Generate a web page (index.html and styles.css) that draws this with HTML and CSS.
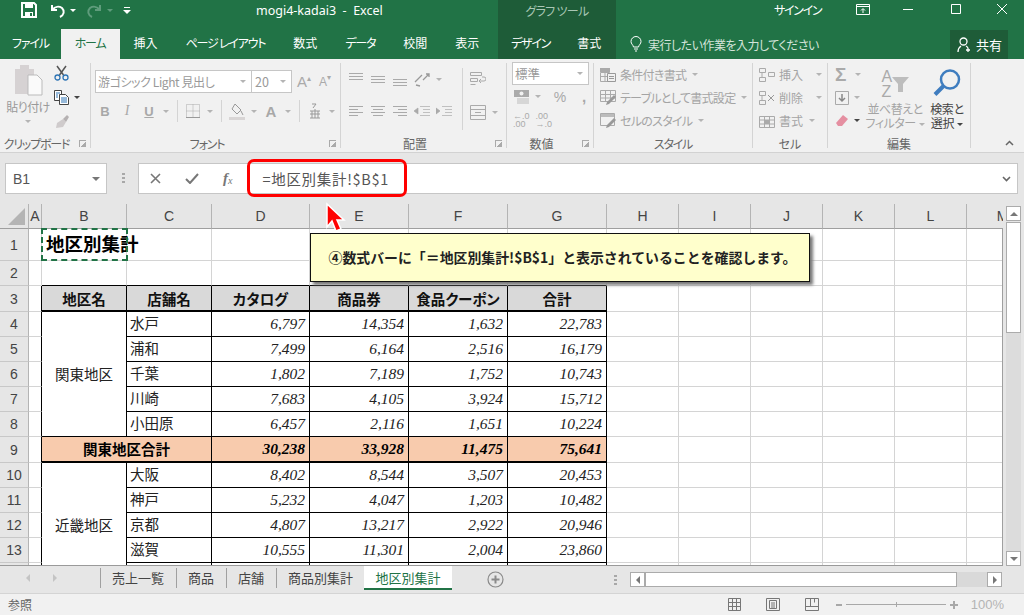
FILE: index.html
```html
<!DOCTYPE html>
<html lang="ja">
<head>
    <meta charset="UTF-8">
    <title>mogi4-kadai3 - Excel</title>
    <link rel="stylesheet" href="styles.css">
</head>
<body>
<div class="app">

    <header class="titlebar">
        <div class="title-main">
            <svg class="qat qat-save" width="16" height="16" viewBox="0 0 16 16"><path d="M1 1h12l2 2v12H1z" fill="none" stroke="#fff" stroke-width="2"/><path d="M4 1h8v5H4zM4 10h8v5H4z" fill="#fff"/><path d="M9 11h2v3H9z" fill="#217346"/></svg>
            <svg class="qat qat-undo" width="17" height="15" viewBox="0 0 17 15"><path d="M3 2v5h5M3.5 6.5C6 3.5 10 3 13 5c3 3 2 7-2 9" fill="none" stroke="#fff" stroke-width="2"/></svg>
            <i class="mini-caret white"></i>
            <svg class="qat qat-redo" width="17" height="15" viewBox="0 0 17 15"><path d="M14 2v5H9M13.500 6.500C11 3.500 7 3 4 5c-3 3-2 7 2 9" fill="none" stroke="#5f9c7c" stroke-width="2"/></svg>
            <i class="mini-caret dim"></i>
            <svg class="qat qat-custom" width="8" height="8" viewBox="0 0 8 8"><path d="M1 1h6v1H1zM0 4h8L4 8z" fill="#fff"/></svg>
            <div class="doc-title">mogi4-kadai3&nbsp; -&nbsp; Excel</div>
        </div>
        <div class="context-label">グラフ ツール</div>
        <div class="title-right">
            <span class="signin">サインイン</span>
            <svg class="win win-ribbon" width="14" height="11" viewBox="0 0 14 11"><path d="M.5.5h13v10H.5zM.5 2.500h13M7 9V5M5 6.500l2-2 2 2" fill="none" stroke="#fff"/></svg>
            <svg class="win win-min" width="10" height="10" viewBox="0 0 10 10"><path d="M0 5.500h10" stroke="#fff"/></svg>
            <svg class="win win-max" width="10" height="10" viewBox="0 0 10 10"><path d="M.5.500h9v9h-9z" fill="none" stroke="#fff"/></svg>
            <svg class="win win-close" width="10" height="10" viewBox="0 0 10 10"><path d="M0 0l10 10M10 0L0 10" stroke="#fff"/></svg>
        </div>
    </header>

    <nav class="tabrow">
        <div class="tabs-main">
            <span class="tab tab-file kana">ファイル</span>
            <span class="tab active kana">ホーム</span>
            <span class="tab">挿入</span>
            <span class="tab kana">ページ レイアウト</span>
            <span class="tab">数式</span>
            <span class="tab kana">データ</span>
            <span class="tab">校閲</span>
            <span class="tab">表示</span>
        </div>
        <div class="tabs-context">
            <span class="tab kana">デザイン</span>
            <span class="tab">書式</span>
        </div>
        <div class="tabs-right">
            <svg class="bulb" width="12" height="16" viewBox="0 0 12 16"><path d="M3.500 11C3 8.500 1 8 1 5.500a5 5 0 0 1 10 0C11 8 9 8.500 8.500 11zM4 13h4M5 15h2" fill="none" stroke="#fff"/></svg>
            <span class="tell-me">実行したい作業を入力してください</span>
            <span class="share">
                <svg width="15" height="15" viewBox="0 0 15 15"><circle cx="6.500" cy="4.500" r="3.500" fill="none" stroke="#fff" stroke-width="1.300"/><path d="M1 15c0-3 1.500-5 3-6M9 9c1 .5 1.500 1 2 2M11 11v4M9 13h4" fill="none" stroke="#fff" stroke-width="1.300"/></svg>
                共有
            </span>
        </div>
    </nav>

    <section class="ribbon">
        <div class="group g-clip">
            <div class="group-body">
                <div class="paste">
                    <svg width="29" height="32" viewBox="0 0 29 32"><path d="M1 5h5V1h9v4h5v25H1z" fill="#d6d2d3"/><path d="M14 11h9l5 5v15H14z" fill="#fafafa" stroke="#bbb"/></svg>
                    <span class="paste-text">貼り付け</span>
                    <i class="mini-caret"></i>
                </div>
                <div class="clip-tools">
                    <svg width="15" height="16" viewBox="0 0 15 16"><path d="M3 1l6.500 9M12 1L5.500 10" stroke="#555" stroke-width="1.500"/><circle cx="3.500" cy="12.500" r="2.500" fill="none" stroke="#2f75b5" stroke-width="1.300"/><circle cx="11.500" cy="12.500" r="2.500" fill="none" stroke="#2f75b5" stroke-width="1.300"/></svg>
                    <div class="clip-copy">
                        <svg width="15" height="15" viewBox="0 0 15 15"><path d="M.5.500h7v10h-7z" fill="#fff" stroke="#444"/><path d="M5.500 4.500h6l3 3v7h-9z" fill="#fff" stroke="#444"/><path d="M2 3h4M2 5h2M2 7h2M7 8h6M7 10h6M7 12h6" stroke="#2f75b5"/></svg>
                        <i class="mini-caret dark"></i>
                    </div>
                    <svg width="16" height="15" viewBox="0 0 16 15"><path d="M9 5l3 3-3 5-7 1 1-5z" fill="#cfcbcc"/><path d="M9 5l4-4 2 2-3 5z" fill="#b5b1b2"/></svg>
                </div>
            </div>
            <div class="group-label has-launcher kana-label">クリップボード</div>
            <i class="launcher"></i>
        </div>

        <div class="group g-font">
            <div class="group-body column">
                <div class="font-combos">
                    <span class="combo combo-font">游ゴシック Light 見出し<i class="mini-caret"></i></span>
                    <span class="combo combo-size">20<i class="mini-caret"></i></span>
                    <span class="grow-a big">A<sup>▴</sup></span>
                    <span class="grow-a small">A<sup>▾</sup></span>
                </div>
                <div class="tool-row font-row">
                    <span class="tool b">B</span>
                    <span class="tool i">I</span>
                    <span class="tool u">U</span>
                    <span class="caret-box"><i class="mini-caret"></i></span>
                    <span class="vsep"></span>
                    <span class="tool"><svg width="14" height="14" viewBox="0 0 14 14"><path d="M.5.500h13v13H.5zM7 .5v13M.5 7h13" fill="none" stroke="#aaa" stroke-dasharray="1 1"/><path d="M0 13.500h14" stroke="#999"/></svg></span>
                    <span class="caret-box"><i class="mini-caret"></i></span>
                    <span class="vsep"></span>
                    <span class="tool"><svg width="17" height="17" viewBox="0 0 17 17"><path d="M6 1l6 6-4 4-5-5zM12 8l2 4" fill="none" stroke="#999"/><path d="M0 14h16v3H0z" fill="#d8d5d5"/></svg></span>
                    <span class="caret-box"><i class="mini-caret"></i></span>
                    <span class="tool color-a">A</span>
                    <span class="caret-box"><i class="mini-caret"></i></span>
                    <span class="vsep"></span>
                    <span class="tool"><svg width="12" height="16" viewBox="0 0 12 16"><path d="M3 1h4L4 5M1 8h10M1 11h10M1 15h10M3 8v7M9 8v7M6 6v9" fill="none" stroke="#999"/></svg></span>
                    <span class="caret-box"><i class="mini-caret"></i></span>
                </div>
            </div>
            <div class="group-label has-launcher kana-label">フォント</div>
            <i class="launcher"></i>
        </div>

        <div class="group g-align">
            <div class="group-body">
                <div class="column align-left">
                    <div class="tool-row align-row1">
                        <span class="tool"><svg width="14" height="14" viewBox="0 0 14 14"><path d="M0 1.500h14M0 4.500h14M0 7.500h14" stroke="#aaa"/></svg></span>
                        <span class="tool"><svg width="14" height="14" viewBox="0 0 14 14"><path d="M0 4.500h14M0 7.500h14M0 10.500h14" stroke="#aaa"/></svg></span>
                        <span class="tool"><svg width="14" height="14" viewBox="0 0 14 14"><path d="M0 7.500h14M0 10.500h14M0 13.500h14" stroke="#aaa"/></svg></span>
                        <span class="tool"><svg width="16" height="15" viewBox="0 0 16 15"><path d="M1 10l7-7M2 13l4 1M9 8l6-6M12 2h3v3" fill="none" stroke="#999" stroke-width="1.300"/></svg></span>
                        <span class="caret-box"><i class="mini-caret"></i></span>
                    </div>
                    <div class="tool-row align-row2">
                        <span class="tool"><svg width="14" height="12" viewBox="0 0 14 12"><path d="M0 .5h14M0 3.500h9M0 6.500h14M0 9.500h9" stroke="#aaa"/></svg></span>
                        <span class="tool"><svg width="14" height="12" viewBox="0 0 14 12"><path d="M0 .5h14M2 3.500h10M0 6.500h14M2 9.500h10" stroke="#aaa"/></svg></span>
                        <span class="tool"><svg width="14" height="12" viewBox="0 0 14 12"><path d="M0 .5h14M5 3.500h9M0 6.500h14M5 9.500h9" stroke="#aaa"/></svg></span>
                        <span class="tool"><svg width="16" height="12" viewBox="0 0 16 12"><path d="M6 .5h10M9 3.500h7M9 6.500h7M6 9.500h10M0 5l4-3v6z" fill="#aaa" stroke="#aaa" stroke-width=".7"/></svg></span>
                        <span class="tool"><svg width="16" height="12" viewBox="0 0 16 12"><path d="M6 .5h10M9 3.500h7M9 6.500h7M6 9.500h10M4 5L0 2v6z" fill="#aaa" stroke="#aaa" stroke-width=".7"/></svg></span>
                    </div>
                </div>
                <span class="vsep tall"></span>
                <div class="column align-right">
                    <span class="tool"><svg width="16" height="15" viewBox="0 0 16 15"><path d="M.5.500h11v3H.5zM.5 6.500h7v3H.5zM.5 12.500h5M9 9h5a1.500 1.500 0 0 0 0-4h-2M11 7l-2 2 2 2" fill="none" stroke="#aaa"/></svg></span>
                    <div class="tool-row merge-row">
                        <span class="tool"><svg width="16" height="15" viewBox="0 0 16 15"><path d="M.5.500h15v14H.5zM.5 4.500h15M.5 10.500h15M5 7.500h6" fill="none" stroke="#aaa"/></svg></span>
                        <span class="caret-box"><i class="mini-caret"></i></span>
                    </div>
                </div>
            </div>
            <div class="group-label has-launcher">配置</div>
            <i class="launcher"></i>
        </div>

        <div class="group g-number">
            <div class="group-body column">
                <span class="combo combo-num">標準<i class="mini-caret"></i></span>
                <div class="tool-row num-row">
                    <span class="tool wide"><svg width="16" height="14" viewBox="0 0 16 14"><path d="M0 0h15v7H0z" fill="#aaa"/><circle cx="7.500" cy="3.500" r="2" fill="#f1f1f1"/><path d="M3 9h12M3 11h12M3 13h12" stroke="#bbb"/></svg></span>
                    <span class="caret-box"><i class="mini-caret"></i></span>
                    <span class="tool pct">%</span>
                    <span class="tool comma">,</span>
                </div>
                <div class="tool-row num-row small-nums">
                    <span class="dec">←.0<br>.00</span>
                    <span class="dec">.00<br>→.0</span>
                </div>
            </div>
            <div class="group-label has-launcher">数値</div>
            <i class="launcher"></i>
        </div>

        <div class="group g-style">
            <div class="group-body column rows3">
                <div class="cmd">
                    <svg width="16" height="14" viewBox="0 0 16 14"><path d="M0 0h10v4H0z" fill="#aaa"/><path d="M.5 4.500h9v9h-9zM5 4v10M0 8.500h10" fill="none" stroke="#aaa"/><path d="M7.500 5.500h8v8h-8z" fill="#f1f1f1" stroke="#999"/><path d="M9 8.500h5M9 10.500h5" stroke="#999"/></svg>
                    <span>条件付き書式</span><i class="mini-caret"></i>
                </div>
                <div class="cmd">
                    <svg width="16" height="15" viewBox="0 0 16 15"><path d="M.5.500h15v11H.5zM5.500.5v11M10.500.5v11M.5 4.500h15M.5 8h15" fill="none" stroke="#aaa"/><path d="M14 5l2 2-7 7-3 1 1-3z" fill="#999"/></svg>
                    <span>テーブルとして書式設定</span><i class="mini-caret"></i>
                </div>
                <div class="cmd">
                    <svg width="16" height="15" viewBox="0 0 16 15"><path d="M.5.500h14v12H.5z" fill="none" stroke="#aaa"/><path d="M1 1h13v3H1z" fill="#bbb"/><path d="M14 5l2 2-7 7-3 1 1-3z" fill="#999"/></svg>
                    <span>セルのスタイル</span><i class="mini-caret"></i>
                </div>
            </div>
            <div class="group-label kana-label">スタイル</div>
        </div>

        <div class="group g-cells">
            <div class="group-body column rows3">
                <div class="cmd">
                    <svg width="16" height="14" viewBox="0 0 16 14"><path d="M.5.500h6v4h-6zM.5 9.500h6v4h-6zM9.500 4.500h6v4h-6zM3 5v4" fill="none" stroke="#aaa"/></svg>
                    <span>挿入</span><i class="mini-caret spaced"></i>
                </div>
                <div class="cmd">
                    <svg width="16" height="14" viewBox="0 0 16 14"><path d="M.5.500h6v4h-6zM.5 9.500h6v4h-6zM3 5v4" fill="none" stroke="#aaa"/><path d="M9 4l6 6M15 4l-6 6" stroke="#999"/></svg>
                    <span>削除</span><i class="mini-caret spaced"></i>
                </div>
                <div class="cmd">
                    <svg width="16" height="14" viewBox="0 0 16 14"><path d="M.5 2.500h15v11H.5zM.5 6h15M.5 10h15M5.500 2v12M10.500 2v12" fill="none" stroke="#aaa"/><path d="M5 6h6v4H5z" fill="#aaa"/></svg>
                    <span>書式</span><i class="mini-caret"></i>
                </div>
            </div>
            <div class="group-label">セル</div>
        </div>

        <div class="group g-edit">
            <div class="group-body">
                <div class="column edit-small">
                    <div class="edit-row">
                        <span class="sigma">Σ</span><i class="mini-caret"></i>
                    </div>
                    <div class="edit-row">
                        <svg width="14" height="14" viewBox="0 0 14 14"><path d="M.5.500h13v13H.5z" fill="none" stroke="#aaa"/><path d="M7 3v7M4 7l3 3 3-3" fill="none" stroke="#888" stroke-width="1.500"/></svg>
                        <i class="mini-caret"></i>
                    </div>
                    <div class="edit-row">
                        <svg width="14" height="14" viewBox="0 0 14 14"><path d="M8 1l5 4-6 7H3L1 9z" fill="#e58fa1"/></svg>
                        <i class="mini-caret dark"></i>
                    </div>
                </div>
                <div class="big-cmd sort">
                    <div class="sort-icon">
                        <span class="az">A<br>Z</span>
                        <svg width="17" height="15" viewBox="0 0 17 15"><path d="M0 0h17l-6 7v8H6V7z" fill="#bdbdbd"/></svg>
                    </div>
                    <span>並べ替えと</span>
                    <span>フィルター<i class="mini-caret inline"></i></span>
                </div>
                <div class="big-cmd find">
                    <svg width="28" height="28" viewBox="0 0 28 28"><circle cx="17" cy="11" r="9" fill="none" stroke="#3f7dbf" stroke-width="2.500"/><path d="M10.500 17.500L2 26" stroke="#3f7dbf" stroke-width="4"/></svg>
                    <span>検索と</span>
                    <span>選択<i class="mini-caret inline dark"></i></span>
                </div>
            </div>
            <div class="group-label">編集</div>
        </div>

        <svg class="collapse" width="9" height="6" viewBox="0 0 9 6"><path d="M1 5l3.500-3.500L8 5" fill="none" stroke="#666" stroke-width="1.500"/></svg>
    </section>

    <section class="formula-bar">
        <div class="name-box">B1<i class="mini-caret big"></i></div>
        <div class="grip"></div>
        <div class="formula-input">
            <svg class="fx-btn" width="11" height="11" viewBox="0 0 11 11"><path d="M1 1l9 9M10 1l-9 9" stroke="#777" stroke-width="1.600"/></svg>
            <svg class="fx-btn" width="14" height="11" viewBox="0 0 14 11"><path d="M1 6l4 4 8-9" fill="none" stroke="#777" stroke-width="2"/></svg>
            <span class="fx-btn fx"><em>f</em><sub>x</sub></span>
            <span class="formula-text">=地区別集計!$B$1</span>
            <svg class="formula-chevron" width="9" height="6" viewBox="0 0 9 6"><path d="M1 1l3.500 3.500L8 1" fill="none" stroke="#666" stroke-width="1.600"/></svg>
        </div>
    </section>

    <section class="sheet">
        <div class="grid-wrap">
            <table class="grid">
                <colgroup>
                    <col class="c-head"><col class="c-a"><col class="c-b"><col class="c-b"><col class="c-d">
                    <col class="c-e"><col class="c-e"><col class="c-e">
                    <col class="c-x"><col class="c-x"><col class="c-x"><col class="c-x"><col class="c-x"><col class="c-x">
                </colgroup>
                <tr class="h-head">
                    <th class="corner"><i></i></th><th>A</th><th>B</th><th>C</th><th>D</th><th>E</th><th>F</th><th>G</th><th>H</th><th>I</th><th>J</th><th>K</th><th>L</th><th>M</th>
                </tr>
                <tr class="h-title">
                    <th>1</th><td></td><td class="book-title">地区別集計</td><td></td><td></td><td></td><td></td><td></td><td></td><td></td><td></td><td></td><td></td><td></td>
                </tr>
                <tr class="h-row">
                    <th>2</th><td></td><td class="line-b"></td><td class="line-b"></td><td class="line-b"></td><td class="line-b"></td><td class="line-b"></td><td class="line-b"></td><td></td><td></td><td></td><td></td><td></td><td></td>
                </tr>
                <tr class="h-bold">
                    <th>3</th><td class="line-r"></td><td class="hdr">地区名</td><td class="hdr">店舗名</td><td class="hdr">カタログ</td><td class="hdr">商品券</td><td class="hdr">食品クーポン</td><td class="hdr">合計</td><td></td><td></td><td></td><td></td><td></td><td></td>
                </tr>
                <tr class="h-row">
                    <th>4</th><td class="line-r"></td><td class="area" rowspan="5">関東地区</td><td class="shop">水戸</td><td class="num">6,797</td><td class="num">14,354</td><td class="num">1,632</td><td class="num">22,783</td><td></td><td></td><td></td><td></td><td></td><td></td>
                </tr>
                <tr class="h-row">
                    <th>5</th><td class="line-r"></td><td class="shop">浦和</td><td class="num">7,499</td><td class="num">6,164</td><td class="num">2,516</td><td class="num">16,179</td><td></td><td></td><td></td><td></td><td></td><td></td>
                </tr>
                <tr class="h-row">
                    <th>6</th><td class="line-r"></td><td class="shop">千葉</td><td class="num">1,802</td><td class="num">7,189</td><td class="num">1,752</td><td class="num">10,743</td><td></td><td></td><td></td><td></td><td></td><td></td>
                </tr>
                <tr class="h-row">
                    <th>7</th><td class="line-r"></td><td class="shop">川崎</td><td class="num">7,683</td><td class="num">4,105</td><td class="num">3,924</td><td class="num">15,712</td><td></td><td></td><td></td><td></td><td></td><td></td>
                </tr>
                <tr class="h-row">
                    <th>8</th><td class="line-r"></td><td class="shop">小田原</td><td class="num">6,457</td><td class="num">2,116</td><td class="num">1,651</td><td class="num">10,224</td><td></td><td></td><td></td><td></td><td></td><td></td>
                </tr>
                <tr class="h-bold">
                    <th>9</th><td class="line-r"></td><td class="sub-name" colspan="2">関東地区合計</td><td class="sub">30,238</td><td class="sub">33,928</td><td class="sub">11,475</td><td class="sub">75,641</td><td></td><td></td><td></td><td></td><td></td><td></td>
                </tr>
                <tr class="h-row">
                    <th>10</th><td class="line-r"></td><td class="area" rowspan="5">近畿地区</td><td class="shop">大阪</td><td class="num">8,402</td><td class="num">8,544</td><td class="num">3,507</td><td class="num">20,453</td><td></td><td></td><td></td><td></td><td></td><td></td>
                </tr>
                <tr class="h-row">
                    <th>11</th><td class="line-r"></td><td class="shop">神戸</td><td class="num">5,232</td><td class="num">4,047</td><td class="num">1,203</td><td class="num">10,482</td><td></td><td></td><td></td><td></td><td></td><td></td>
                </tr>
                <tr class="h-row">
                    <th>12</th><td class="line-r"></td><td class="shop">京都</td><td class="num">4,807</td><td class="num">13,217</td><td class="num">2,922</td><td class="num">20,946</td><td></td><td></td><td></td><td></td><td></td><td></td>
                </tr>
                <tr class="h-row">
                    <th>13</th><td class="line-r"></td><td class="shop">滋賀</td><td class="num">10,555</td><td class="num">11,301</td><td class="num">2,004</td><td class="num">23,860</td><td></td><td></td><td></td><td></td><td></td><td></td>
                </tr>
                <tr class="h-row">
                    <th></th><td class="line-r"></td><td class="shop"></td><td class="num"></td><td class="num"></td><td class="num"></td><td class="num"></td><td></td><td></td><td></td><td></td><td></td><td></td>
                </tr>
            </table>
        </div>
        <div class="vscroll">
            <span class="sb-btn"><i class="tri up"></i></span>
            <span class="sb-thumb"></span>
            <span class="sb-space"></span>
            <span class="sb-btn"><i class="tri down"></i></span>
        </div>
    </section>

    <div class="sheet-tabs">
        <div class="tab-nav"><i class="tri left pale"></i><i class="tri right pale"></i></div>
        <span class="stab">売上一覧</span>
        <span class="stab">商品</span>
        <span class="stab">店舗</span>
        <span class="stab">商品別集計</span>
        <span class="stab current">地区別集計</span>
        <svg class="add-sheet" width="17" height="17" viewBox="0 0 17 17"><circle cx="8.500" cy="8.500" r="7.500" fill="none" stroke="#8a8a8a" stroke-width="1.200"/><path d="M8.500 4.500v8M4.500 8.500h8" stroke="#8a8a8a" stroke-width="2"/></svg>
        <div class="grip small"></div>
        <div class="hscroll">
            <span class="hs-btn"><i class="tri left"></i></span>
            <span class="hs-thumb"></span>
            <span class="hs-space"></span>
            <span class="hs-btn"><i class="tri right"></i></span>
        </div>
    </div>

    <footer class="statusbar">
        <span class="mode">参照</span>
        <div class="status-right">
            <svg width="13" height="13" viewBox="0 0 13 13"><path d="M.5.500h12v12H.5zM4.500.5v12M8.500.5v12M.5 4.500h12M.5 8.500h12" fill="none" stroke="#777"/></svg>
            <svg width="14" height="13" viewBox="0 0 14 13"><path d="M.5.500h13v12H.5z" fill="none" stroke="#777"/><path d="M3.500 2.500h7v8h-7zM5 5h4M5 7h4M5 9h4" fill="none" stroke="#777"/></svg>
            <svg width="14" height="13" viewBox="0 0 14 13"><path d="M.5.500h13v12H.5zM.5 8.500h13M5.500.5v8M9.500.5v4" fill="none" stroke="#777"/></svg>
            <div class="zoom-ctl">
                <span class="zoom-minus"></span>
                <span class="zoom-track"><i></i></span>
                <span class="zoom-plus"></span>
            </div>
            <span class="zoom-val">100%</span>
        </div>
    </footer>

    <div class="ants"></div>
    <div class="red-frame"></div>
    <svg class="pointer" width="24" height="32" viewBox="0 0 24 32"><path d="M3 2v23l5-6 4 10 5-2-4-9h7z" fill="#f00" stroke="#fff" stroke-width="1.500"/></svg>
    <div class="callout">④数式バーに「＝地区別集計!$B$1」と表示されていることを確認します。</div>
</div>
</body>
</html>
```

FILE: styles.css
```css
* {
    box-sizing: border-box;
}
html, body {
    margin: 0;
    height: 100%;
    overflow: hidden;
}
body {
    font-family: "Noto Sans CJK JP", "Noto Sans", sans-serif;
    font-feature-settings: "palt";
    font-size: 12px;
    color: #444;
}
.app {
    position: relative;
    width: 1024px;
    height: 615px;
    overflow: hidden;
    background: #e6e6e6;
}
.column {
    display: flex;
    flex-direction: column;
}

/* title bar */
.titlebar {
    display: flex;
    height: 29px;
    color: #fff;
    background: #217346;
}
.title-main {
    display: flex;
    align-items: center;
    width: 498px;
    height: 20px;
    padding-left: 21px;
}
.qat-undo { margin-left: 12px; }
.qat-redo { margin-left: 10px; }
.qat-custom { margin-left: 10px; }
.doc-title {
    margin-left: 125px;
    font-family: "Noto Sans", sans-serif;
    font-size: 12.500px;
    white-space: nowrap;
}
.context-label {
    width: 118px;
    padding-top: 2px;
    text-align: center;
    letter-spacing: -.7px;
    color: #a9c7b5;
    background: #1e5c38;
}
.title-right {
    flex: 1;
    display: flex;
    align-items: center;
    height: 18px;
    padding-left: 158px;
}
.signin { letter-spacing: -1.300px; }
.win-ribbon { margin-left: 35px; }
.win-min { margin-left: 33px; }
.win-max { margin-left: 38px; }
.win-close { margin-left: 36px; }

/* tabs */
.tabrow {
    display: flex;
    height: 30px;
    color: #fff;
    background: #217346;
}
.tabs-main {
    display: flex;
    width: 498px;
}
.tabs-context {
    display: flex;
    width: 118px;
    background: #1e5c38;
}
.tab {
    padding: 5px 14px 0;
    white-space: nowrap;
}
.tab.kana {
    letter-spacing: -1.200px;
}
.tab-file {
    padding: 5px 12px 0 12px;
}
.tab.active {
    color: #217346;
    background: #f1f1f1;
}
.tabs-context .tab {
    padding: 5px 14px 0 13px;
}
.tabs-right {
    flex: 1;
    display: flex;
    align-items: center;
    padding-left: 14px;
}
.tell-me {
    width: 160px;
    margin-left: 6px;
    letter-spacing: -.5px;
    white-space: nowrap;
    color: #d4e4da;
}
.share {
    display: flex;
    align-items: center;
    gap: 4px;
    flex: none;
    width: 58px;
    height: 29px;
    margin-left: 142px;
    padding-left: 7px;
    font-size: 13px;
    background: #1e5c38;
}

/* ribbon */
.ribbon {
    position: relative;
    display: flex;
    height: 94px;
    padding-top: 4px;
    color: #999;
    background: #f1f1f1;
    border-bottom: 1px solid #d2d2d2;
}
.group {
    position: relative;
    display: flex;
    flex-direction: column;
    height: 85px;
    border-right: 1px solid #d4d4d4;
}
.group-body {
    flex: 1;
    display: flex;
    min-height: 0;
}
.group-body.column {
    flex-direction: column;
}
.group-label {
    height: 12px;
    line-height: 16px;
    text-align: center;
    white-space: nowrap;
    color: #666;
}
.has-launcher {
    padding-right: 17px;
}
.kana-label {
    letter-spacing: -1.200px;
}
.launcher {
    position: absolute;
    right: 4px;
    bottom: 1px;
    width: 7px;
    height: 7px;
    border-left: 1px solid #aaa;
    border-top: 1px solid #aaa;
    background: linear-gradient(135deg, transparent 55%, #aaa 55%);
}
.g-clip { width: 91px; }
.g-font { width: 250px; }
.g-align { width: 166px; }
.g-number { width: 87px; }
.g-style { width: 159px; }
.g-cells { width: 75px; }
.g-edit { width: 143px; }

.mini-caret {
    display: inline-block;
    width: 0;
    height: 0;
    border-left: 3.5px solid transparent;
    border-right: 3.5px solid transparent;
    border-top: 3.5px solid #b4b4b4;
}
.mini-caret.dark { border-top-color: #444; }
.mini-caret.white { border-top-color: #fff; margin-left: 4px; }
.mini-caret.dim { border-top-color: #5f9c7c; margin-left: 4px; }
.mini-caret.big {
    border-left-width: 4px;
    border-right-width: 4px;
    border-top-width: 4px;
    border-top-color: #777;
}
.mini-caret.inline { margin-left: 3px; vertical-align: middle; }
.mini-caret.spaced { margin-left: 15px; }

/* clipboard */
.paste {
    display: flex;
    flex-direction: column;
    align-items: center;
    width: 54px;
    padding: 1px 0 0 2px;
}
.paste-text {
    margin-top: 2px;
    letter-spacing: -.6px;
    white-space: nowrap;
}
.paste .mini-caret {
    margin-top: 5px;
}
.clip-tools {
    display: flex;
    flex-direction: column;
    gap: 9px;
    padding-top: 2px;
}
.clip-copy {
    display: flex;
    align-items: center;
    gap: 5px;
}

/* font */
.g-font .group-body {
    padding: 7px 0 0 4px;
}
.font-combos {
    display: flex;
    align-items: center;
    height: 23px;
}
.combo {
    display: flex;
    align-items: center;
    justify-content: space-between;
    height: 23px;
    padding: 0 5px 0 2px;
    background: #fff;
    border: 1px solid #c6c6c6;
    white-space: nowrap;
}
.combo-font {
    width: 157px;
    letter-spacing: -.4px;
}
.combo-size {
    width: 40px;
    padding-left: 3px;
    font-size: 12.500px;
    border-left: 0;
}
.grow-a {
    font-family: "Liberation Sans", sans-serif;
    color: #aaa;
    white-space: nowrap;
}
.grow-a.big { font-size: 15px; width: 22px; margin-left: 5px; }
.grow-a.small { font-size: 12px; width: 20px; }
.grow-a sup { font-size: 8px; vertical-align: 6px; line-height: 0; }
.tool-row {
    display: flex;
    align-items: center;
}
.font-row {
    height: 22px;
    margin: 7px 0 0 -1px;
}
.tool {
    display: flex;
    align-items: center;
    justify-content: center;
    width: 22px;
    height: 22px;
    font-family: "Liberation Sans", sans-serif;
    font-size: 13px;
    color: #a8a8a8;
}
.tool.b { font-weight: 700; }
.tool.i { font-family: "Liberation Serif", serif; font-style: italic; font-size: 14px; }
.tool.u { text-decoration: underline; font-weight: 700; }
.tool.color-a { font-size: 15px; font-weight: 700; }
.caret-box {
    display: flex;
    justify-content: center;
    width: 12px;
}
.vsep {
    width: 1px;
    height: 22px;
    margin: 0 4px 0 5px;
    background: #d4d4d4;
}
.vsep.tall {
    height: 62px;
    margin: 5px 4px 0 6px;
}

/* alignment */
.g-align .group-body {
    padding-left: 4px;
}
.align-left {
    width: 111px;
}
.align-row1 {
    margin-top: 5px;
}
.align-row2 {
    margin-top: 11px;
}
.align-right {
    padding-top: 5px;
}
.merge-row {
    margin-top: 11px;
}

/* number */
.g-number .group-body {
    padding-left: 5px;
}
.combo-num {
    width: 77px;
    margin-top: -1px;
    flex: none;
    font-size: 12.500px;
}
.num-row {
    height: 23px;
}
.tool.wide {
    width: 20px;
}
.tool.pct { width: 30px; font-size: 14px; margin-left: 1px; }
.tool.comma { width: 18px; font-size: 15px; font-weight: 700; }
.small-nums {
    gap: 6px;
    padding-left: 1px;
}
.dec {
    font-family: "Liberation Sans", sans-serif;
    font-size: 9px;
    line-height: 8px;
    white-space: nowrap;
    color: #aaa;
}

/* styles and cells */
.rows3 {
    padding: 0 0 0 6px;
}
.cmd {
    display: flex;
    align-items: center;
    gap: 3px;
    height: 23px;
    letter-spacing: -.7px;
    white-space: nowrap;
    color: #a4a4a4;
}
.g-cells .cmd {
    letter-spacing: 0;
}
.cmd svg {
    flex: none;
    margin-right: 1px;
}
.cmd .mini-caret {
    margin-left: 3px;
}
.cmd .mini-caret.spaced {
    margin-left: 10px;
}

/* editing */
.edit-small {
    width: 39px;
    padding: 0 0 0 7px;
}
.edit-row {
    display: flex;
    align-items: center;
    gap: 5px;
    height: 23px;
}
.sigma {
    font-family: "Liberation Sans", sans-serif;
    font-size: 19px;
    font-weight: 700;
    color: #aaa;
    width: 15px;
}
.big-cmd {
    display: flex;
    flex-direction: column;
    align-items: center;
    line-height: 14px;
    white-space: nowrap;
}
.sort {
    width: 56px;
    padding-top: 3px;
    letter-spacing: -.5px;
    color: #a4a4a4;
}
.sort-icon {
    display: flex;
    align-items: center;
    height: 36px;
}
.az {
    font-family: "Liberation Sans", sans-serif;
    font-size: 16px;
    font-weight: 400;
    line-height: 15px;
    color: #aaa;
}
.find {
    width: 44px;
    margin-left: 2px;
    padding-top: 3px;
    letter-spacing: -.3px;
    color: #444;
}
.find svg {
    height: 33px;
    margin-bottom: 3px;
}
.collapse {
    position: absolute;
    right: 10px;
    bottom: 6px;
}

/* formula bar */
.formula-bar {
    display: flex;
    align-items: center;
    height: 51px;
    padding: 0 6px 0 5px;
}
.name-box {
    display: flex;
    align-items: center;
    justify-content: space-between;
    width: 102px;
    height: 31px;
    padding: 0 6px 0 7px;
    font-family: "Liberation Sans", sans-serif;
    font-size: 14px;
    color: #555;
    background: #fff;
    border: 1px solid #c6c6c6;
}
.grip {
    width: 3px;
    height: 11px;
    margin: 0 13px 0 15px;
    background: repeating-linear-gradient(#a8a8a8 0 2px, transparent 2px 4px);
}
.formula-input {
    flex: 1;
    display: flex;
    align-items: center;
    height: 31px;
    padding: 0 6px 0 11px;
    background: #fff;
    border: 1px solid #c6c6c6;
}
.fx-btn {
    flex: none;
}
.fx-btn + .fx-btn {
    margin-left: 24px;
}
.fx {
    font-family: "Liberation Serif", serif;
    font-size: 15px;
    color: #777;
}
.fx sub {
    font-size: 10px;
    font-style: italic;
    vertical-align: -1px;
}
.fx em {
    font-weight: 700;
}
.formula-text {
    margin-left: 30px;
    font-size: 14.500px;
    letter-spacing: .7px;
    color: #555;
}
.formula-chevron {
    margin-left: auto;
}

/* sheet */
.sheet {
    display: flex;
    height: 362px;
}
.grid-wrap {
    position: relative;
    width: 1003px;
    height: 362px;
    overflow: hidden;
    border-bottom: 1px solid #9a9a9a;
}
.grid-wrap::after {
    content: "";
    position: absolute;
    top: 24px;
    right: 0;
    bottom: 0;
    width: 1px;
    background: #9f9f9f;
}
.grid {
    table-layout: fixed;
    width: 1039px;
    border-collapse: separate;
    border-spacing: 0;
    background: #fff;
    color: #222;
}
.c-head { width: 29px; }
.c-a { width: 13px; }
.c-b { width: 85px; }
.c-d { width: 98px; }
.c-e { width: 99px; }
.c-x { width: 72px; }
.grid th {
    padding: 0;
    font-family: "Liberation Sans", sans-serif;
    font-size: 14px;
    font-weight: 400;
    color: #444;
    background: #e6e6e6;
    border-right: 1px solid #b4b4b4;
    border-bottom: 1px solid #c8c8c8;
}
.grid td {
    padding: 0;
    white-space: nowrap;
    border-right: 1px solid #d4d4d4;
    border-bottom: 1px solid #d4d4d4;
}
.h-head { height: 25px; }
.h-head th { border-bottom-color: #9f9f9f; }
.h-title { height: 32px; }
.h-row { height: 25px; }
.h-bold { height: 26px; }
.corner {
    position: relative;
}
.corner i {
    position: absolute;
    right: 3px;
    bottom: 3px;
    width: 0;
    height: 0;
    border-left: 17px solid transparent;
    border-bottom: 17px solid #b4b4b4;
}
.grid .book-title {
    padding: 0 0 4px 4px;
    font-size: 18.500px;
    font-weight: 700;
    color: #000;
}
.grid .line-b { border-bottom-color: #000; }
.grid .line-r { border-right-color: #000; }
.grid .hdr {
    text-align: center;
    font-size: 14.500px;
    font-weight: 700;
    color: #111;
    background: #d9d9d9;
    border-right-color: #000;
    border-bottom: 2px solid #000;
}
.grid .area {
    padding-bottom: 2px;
    text-align: center;
    font-size: 14.500px;
    border-right-color: #000;
    border-bottom-color: #000;
}
.grid .shop {
    padding: 0 0 3px 3px;
    font-size: 14.500px;
    border-right-color: #000;
    border-bottom-color: #000;
}
.grid .num,
.grid .sub {
    padding-right: 4px;
    text-align: right;
    font-family: "Liberation Serif", serif;
    font-size: 15.500px;
    font-style: italic;
    border-right-color: #000;
    border-bottom-color: #000;
}
.grid .sub,
.grid .sub-name {
    font-weight: 700;
    color: #000;
    background: #f8cbad;
    border-right-color: #000;
    border-bottom: 2px solid #000;
}
.grid .sub-name {
    padding-bottom: 2px;
    text-align: center;
    font-size: 14.500px;
}
.vscroll {
    flex: 1;
    display: flex;
    flex-direction: column;
    padding: 2px 3px 0;
    background: #e6e6e6;
}
.sb-btn {
    display: flex;
    align-items: center;
    justify-content: center;
    height: 15px;
    background: #fff;
    border: 1px solid #ababab;
}
.sb-thumb {
    height: 111px;
    margin-top: 1px;
    background: #fff;
    border: 1px solid #ababab;
}
.sb-space {
    flex: 1;
    background: #dcdcdc;
}
.tri {
    display: block;
    width: 0;
    height: 0;
    border: 4px solid transparent;
}
.tri.up { border-bottom-color: #777; border-top-width: 0; }
.tri.down { border-top-color: #777; border-bottom-width: 0; }
.tri.left { border-right-color: #777; border-left-width: 0; }
.tri.right { border-left-color: #777; border-right-width: 0; }
.tri.left.pale { border-right-color: #c4c4c4; }
.tri.right.pale { border-left-color: #c4c4c4; }

/* sheet tabs */
.sheet-tabs {
    display: flex;
    align-items: flex-start;
    height: 27px;
}
.tab-nav {
    display: flex;
    align-items: center;
    gap: 23px;
    width: 100px;
    height: 24px;
    padding-left: 26px;
}
.stab {
    height: 20px;
    margin-top: 2px;
    padding: 0 12px 0 11px;
    line-height: 20px;
    font-size: 13px;
    color: #444;
    border-left: 1px solid #a0a0a0;
    white-space: nowrap;
}
.stab.current {
    width: 88px;
    height: 24px;
    margin: 0 0 0 -1px;
    padding: 0;
    line-height: 24px;
    text-align: center;
    color: #217346;
    background: #fff;
    border-left: 0;
    border-bottom: 2px solid #217346;
}
.add-sheet {
    flex: none;
    margin: 5px 0 0 35px;
}
.grip.small {
    margin: 9px 13px 0 110px;
}
.hscroll {
    display: flex;
    flex: none;
    width: 372px;
    height: 15px;
    margin-top: 6px;
}
.hs-btn {
    display: flex;
    align-items: center;
    justify-content: center;
    width: 15px;
    background: #fff;
    border: 1px solid #ababab;
}
.hs-thumb {
    width: 312px;
    background: #fff;
    border: 1px solid #ababab;
}
.hs-space {
    flex: 1;
    background: #d9d9d9;
}

/* status bar */
.statusbar {
    display: flex;
    align-items: center;
    justify-content: space-between;
    height: 22px;
    padding: 0 20px 0 8px;
    background: #f1f1f1;
    border-top: 1px solid #d4d4d4;
}
.mode {
    font-size: 12px;
    color: #666;
}
.status-right {
    display: flex;
    align-items: center;
    gap: 25px;
}
.zoom-ctl {
    display: flex;
    align-items: center;
    gap: 4px;
    margin-left: -8px;
}
.zoom-minus {
    width: 6px;
    height: 2px;
    background: #a8a8a8;
}
.zoom-track {
    position: relative;
    width: 100px;
    height: 1px;
    background: #a8a8a8;
}
.zoom-track i {
    position: absolute;
    left: 50px;
    top: -2px;
    width: 1px;
    height: 5px;
    background: #a8a8a8;
}
.zoom-plus {
    width: 8px;
    height: 8px;
    background:
        linear-gradient(#a8a8a8, #a8a8a8) center / 8px 2px no-repeat,
        linear-gradient(#a8a8a8, #a8a8a8) center / 2px 8px no-repeat;
}
.zoom-val {
    margin-left: -12px;
    font-family: "Liberation Sans", sans-serif;
    font-size: 13px;
    color: #b4b4b4;
}

/* things laid over the sheet */
.ants {
    position: absolute;
    left: 41px;
    top: 228px;
    width: 87px;
    height: 33px;
    border: 2px dashed #217346;
}
.red-frame {
    position: absolute;
    left: 247px;
    top: 159px;
    width: 160px;
    height: 38px;
    border: 3px solid #f00;
    border-radius: 7px;
}
.pointer {
    position: absolute;
    left: 324px;
    top: 202px;
}
.callout {
    position: absolute;
    left: 310px;
    top: 233px;
    width: 500px;
    height: 49px;
    padding-left: 5px;
    line-height: 47px;
    text-align: center;
    font-size: 13.900px;
    font-weight: 700;
    font-feature-settings: normal;
    color: #222;
    background: #ffffcc;
    border: 1px solid #111;
    box-shadow: 3px 3px 3px #777;
    white-space: nowrap;
}
```
